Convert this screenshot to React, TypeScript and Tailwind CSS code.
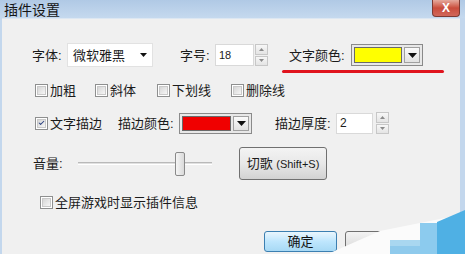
import { Check } from 'lucide-react'

const FONT = "font-['Liberation_Sans','Noto_Sans_CJK_SC',sans-serif]"

function CheckBox({ checked = false }: { checked?: boolean }) {
  return (
    <div className="w-[13px] h-[13px] border border-[#8e8f8f] bg-white p-[1px] shrink-0">
      <div className="w-full h-full border border-[#c9c9c9] bg-gradient-to-br from-[#d6d6d6] to-[#f6f6f6] flex items-center justify-center">
        {checked && <Check size={10} strokeWidth={3.5} className="text-[#2c4280]" />}
      </div>
    </div>
  )
}

function CheckItem({ label, checked, width }: { label: string; checked?: boolean; width: string }) {
  return (
    <div className={`flex items-center gap-[2px] ${width}`}>
      <CheckBox checked={checked} />
      <span className="text-[13px] leading-[13px] text-[#1b1b1b]">{label}</span>
    </div>
  )
}

function Arrow() {
  return (
    <svg width="9" height="5" viewBox="0 0 9 5">
      <path d="M0 0 L9 0 L4.5 5 Z" fill="#111" />
    </svg>
  )
}

function Spinner() {
  return (
    <div className="flex flex-col gap-[1px] w-[13px] h-[22px]">
      {['up', 'down'].map((dir) => (
        <div
          key={dir}
          className="flex-1 border border-[#c7c7c7] bg-gradient-to-b from-[#f7f7f7] to-[#e4e4e4] flex items-center justify-center"
        >
          <svg width="5" height="3" viewBox="0 0 5 3">
            <path d={dir === 'up' ? 'M0 3 L5 3 L2.5 0 Z' : 'M0 0 L5 0 L2.5 3 Z'} fill="#8a8a8a" />
          </svg>
        </div>
      ))}
    </div>
  )
}

function ColorBox({ color, width, height }: { color: string; width: string; height: string }) {
  return (
    <div className={`flex ${width} ${height} border border-[#8a8a8a] bg-[#e8e8e8] p-[2px] gap-[2px]`}>
      <div className="flex-1 border border-[#6a6a6a]" style={{ backgroundColor: color }} />
      <div className="w-[16px] border border-[#a0a0a0] bg-gradient-to-b from-[#fafafa] to-[#e2e2e2] flex items-center justify-center">
        <Arrow />
      </div>
    </div>
  )
}

export default function App() {
  return (
    <div className={`relative w-[465px] h-[254px] overflow-hidden bg-[#c3d7ed] ${FONT}`}>
      {/* title bar */}
      <div className="flex h-[18px] bg-gradient-to-b from-[#b0c9e5] to-[#c5d9ee]">
        <span className="pl-[4px] text-[14px] leading-[18px] text-[#151515] font-['Noto_Sans_CJK_SC',sans-serif]">
          插件设置
        </span>
        <div className="ml-auto mr-[5px] w-[28px] h-[17px] rounded-b-[4px] border border-t-0 border-[#7d3a33] bg-gradient-to-b from-[#e4a99d] via-[#c94c3c] to-[#d1675a] flex items-center justify-center">
          <span className="text-[12px] leading-[12px] font-bold text-white">X</span>
        </div>
      </div>

      {/* content */}
      <div className="ml-[2px] mr-[5px] h-[236px] bg-[#f0f0f0] border-t border-[#dde7f2] pt-[24px] text-[#1b1b1b]">
        {/* row 1 */}
        <div className="flex items-center h-[24px] pl-[30px]">
          <span className="w-[35px] text-[13px] leading-[13px]">字体:</span>
          <div className="flex items-center w-[86px] h-[24px] bg-white border border-[#e2e2e2] pl-[5px] pr-[4px]">
            <span className="text-[13px] leading-[13px]">微软雅黑</span>
            <div className="ml-auto mr-[1px]">
              <svg width="7" height="4" viewBox="0 0 7 4">
                <path d="M0 0 L7 0 L3.5 4 Z" fill="#111" />
              </svg>
            </div>
          </div>
          <span className="ml-[27px] w-[35px] text-[13px] leading-[13px]">字号:</span>
          <div className="flex items-center w-[39px] h-[22px] bg-white border border-[#d9d9d9] pl-[3px]">
            <span className="text-[11px] leading-[11px]">18</span>
          </div>
          <div className="ml-[1px]">
            <Spinner />
          </div>
          <span className="ml-[21px] w-[62px] text-[13px] leading-[13px]">文字颜色:</span>
          <ColorBox color="#ffff00" width="w-[72px]" height="h-[22px]" />
        </div>

        {/* row 2 */}
        <div className="flex items-center h-[13px] mt-[17px] pl-[33px]">
          <CheckItem label="加粗" width="w-[60px]" />
          <CheckItem label="斜体" width="w-[62px]" />
          <CheckItem label="下划线" width="w-[74px]" />
          <CheckItem label="删除线" width="w-[70px]" />
        </div>

        {/* row 3 */}
        <div className="flex items-center h-[22px] mt-[15px] pl-[33px]">
          <CheckItem label="文字描边" checked width="w-[83px]" />
          <span className="w-[61px] text-[13px] leading-[13px]">描边颜色:</span>
          <ColorBox color="#f00000" width="w-[73px]" height="h-[21px]" />
          <span className="ml-[23px] w-[61px] text-[13px] leading-[13px]">描边厚度:</span>
          <div className="flex items-center w-[37px] h-[21px] bg-white border border-[#d9d9d9] pl-[3px]">
            <span className="text-[12px] leading-[12px]">2</span>
          </div>
          <div className="ml-[3px]">
            <Spinner />
          </div>
        </div>

        {/* row 4 */}
        <div className="flex items-center h-[33px] mt-[13px] pl-[31px]">
          <span className="w-[45px] text-[13px] leading-[13px]">音量:</span>
          <div className="relative w-[134px] h-[24px] flex items-center">
            <div className="w-full h-[3px] border-t border-b border-t-[#b9b9b9] border-b-[#ffffff] bg-[#e0e0e0]" />
            <div className="absolute left-[97px] top-0 w-[10px] h-[24px] rounded-[2px] border border-[#8a8a8a] bg-gradient-to-r from-[#f5f5f5] to-[#dadada]" />
          </div>
          <button className="ml-[27px] w-[88px] h-[33px] rounded-[3px] border border-[#707070] bg-gradient-to-b from-[#f3f3f3] via-[#e8e8e8] to-[#d2d2d2] text-[13px] leading-[13px] text-[#1b1b1b]">
            切歌 <span className="text-[11px]">(Shift+S)</span>
          </button>
        </div>

        {/* row 5 */}
        <div className="flex items-center h-[13px] mt-[16px] pl-[38px]">
          <CheckItem label="全屏游戏时显示插件信息" width="w-[200px]" />
        </div>

        {/* bottom buttons */}
        <div className="flex h-[21px] mt-[22px] pl-[262px]">
          <button className="w-[73px] h-[21px] rounded-[3px] border border-[#3c7fb1] bg-gradient-to-b from-[#eaf6fd] via-[#bee6fd] to-[#a7d9f5] text-[13px] leading-[13px] text-[#111]">
            确定
          </button>
          <button className="ml-[8px] w-[73px] h-[21px] rounded-[3px] border border-[#707070] bg-gradient-to-b from-[#f3f3f3] to-[#d8d8d8] text-[13px] leading-[13px]">
            取消
          </button>
        </div>
      </div>

      {/* annotation underline */}
      <div className="absolute left-[282px] top-[70px] w-[162px] h-[3px] rounded-full bg-[#e0141e]" />

      {/* watermark corner */}
      <svg className="absolute right-0 bottom-0" width="135" height="50" viewBox="0 0 135 50">
        <path d="M0 49 L50 27 L135 10 L135 50 L0 50 Z" fill="#fbfbfb" />
        <path d="M60 50 L60 36 L135 36 L135 50 Z" fill="#a9d7f0" />
        <path d="M90 50 L90 19 L107 19 L107 50 Z" fill="#8ccbee" />
        <path d="M107 50 L107 18 L135 6 L135 50 Z" fill="#4fb0e4" />
        <path d="M60 50 L60 42 L90 42 L90 50 Z" fill="#8fcaec" />
      </svg>
    </div>
  )
}
